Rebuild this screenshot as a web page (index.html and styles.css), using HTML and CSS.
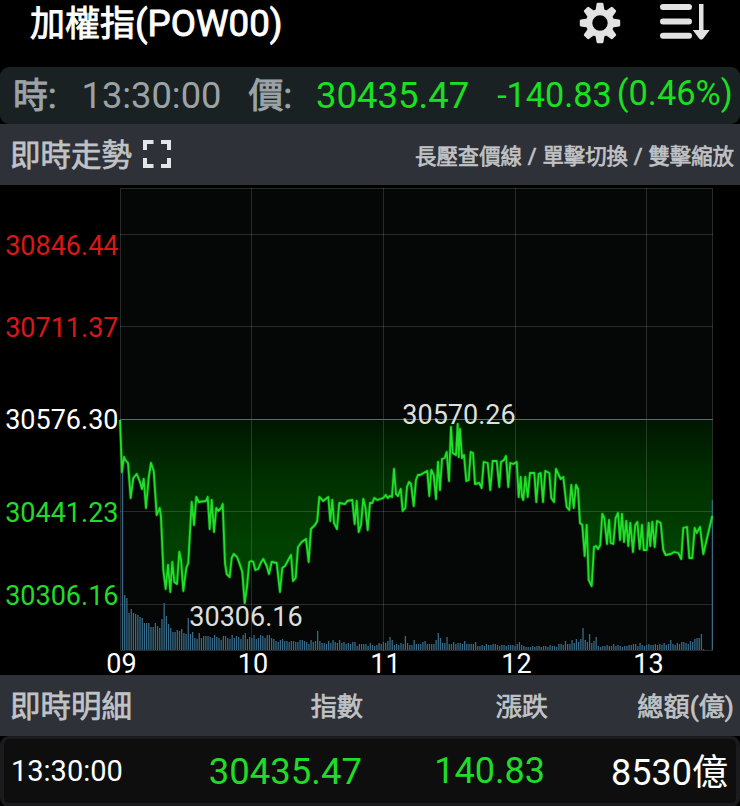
FILE: index.html
```html
<!DOCTYPE html>
<html lang="zh-Hant">
<head>
  <meta charset="UTF-8">
  <meta name="viewport" content="width=device-width, initial-scale=1.0">
  <title>加權指(POW00)</title>
  <link rel="stylesheet" href="styles.css">
</head>
<body>
  <div class="header">
    <h1>加權指<span class="symbol">(POW00)</span></h1>
    <div class="header-icons">
      <svg width="42" height="44" viewBox="-21 -23 42 44">
        <g fill="#e2e2e2">
          <path fill-rule="evenodd" d="M0-14a14 14 0 1 0 0 28a14 14 0 1 0 0-28zM0-7.700a7.700 7.700 0 1 1 0 15.400a7.700 7.700 0 1 1 0-15.400z"/>
          <path id="tooth" d="M-4.600-12L-3.400-19.200Q-3.200-20.200-2.200-20.200H2.200Q3.200-20.200 3.400-19.200L4.600-12z"/>
          <use href="#tooth" transform="rotate(45)"/>
          <use href="#tooth" transform="rotate(90)"/>
          <use href="#tooth" transform="rotate(135)"/>
          <use href="#tooth" transform="rotate(180)"/>
          <use href="#tooth" transform="rotate(225)"/>
          <use href="#tooth" transform="rotate(270)"/>
          <use href="#tooth" transform="rotate(315)"/>
        </g>
      </svg>
      <svg width="52" height="42" viewBox="0 -1.500 52 42">
        <path d="M4 5.500H30M4 20H30M4 34.300H30" stroke="#e2e2e2" stroke-width="6" stroke-linecap="round"/>
        <path d="M40 2.500h4.500v26h6.200l-6.400 8.600q-2.100 2.200-4.200 0L33.800 28.500h6.200z" fill="#e2e2e2"/>
      </svg>
    </div>
  </div>

  <div class="quote">
    <span class="quote-label">時:</span>
    <span class="quote-time">13:30:00</span>
    <span class="quote-label">價:</span>
    <span class="quote-price">30435.47</span>
    <span class="quote-change">-140.83</span>
    <span class="quote-percent">(0.46%)</span>
  </div>

  <div class="bar">
    <h2>即時走勢</h2>
    <svg class="expand" width="28" height="28" viewBox="0 0 28 28">
      <path d="M2 10V2H10.500M18 2H26V10M26 18V26H18M10.500 26H2V18" fill="none" stroke="#e4e5e7" stroke-width="4"/>
    </svg>
    <span class="hint">長壓查價線 / 單擊切換 / 雙擊縮放</span>
  </div>

  <svg class="chart" width="740" height="490" viewBox="0 185 740 490">
    <defs>
      <linearGradient id="fall" gradientUnits="userSpaceOnUse" x1="0" y1="419" x2="0" y2="540">
        <stop offset="0" stop-color="#001600"/>
        <stop offset="0.5" stop-color="#003000"/>
        <stop offset="1" stop-color="#004000"/>
      </linearGradient>
    </defs>
    <rect x="120" y="188" width="593" height="463" fill="#040706"/>
    <path id="area" fill="url(#fall)"/>
    <g class="grid">
      <path d="M120.500 188.500H712.500V650.500H120.500z"/>
      <path d="M120 234.500H713M120 326.500H713M120 511.500H713M120 604.500H713"/>
      <path d="M251.500 188V651M383.500 188V651M515.500 188V651M646.500 188V651"/>
    </g>
    <path class="base-line" d="M120 419.500H713"/>
    <path id="volume" class="volume"/>
    <polyline id="glow" class="glow"/>
    <polyline id="price" class="price"/>
    <g class="y-axis">
      <text class="up" x="118.500" y="254.500">30846.44</text>
      <text class="up" x="118.500" y="336.500">30711.37</text>
      <text x="118.500" y="429">30576.30</text>
      <text class="down" x="118.500" y="521.500">30441.23</text>
      <text class="down" x="118.500" y="604.500">30306.16</text>
    </g>
    <g class="x-axis">
      <text x="121.500" y="673">09</text>
      <text x="253" y="673">10</text>
      <text x="385.500" y="673">11</text>
      <text x="516.500" y="673">12</text>
      <text x="648.500" y="673">13</text>
    </g>
    <text class="mark" x="459" y="423.500">30570.26</text>
    <text class="mark" x="246" y="625.500">30306.16</text>
  </svg>

  <div class="bar detail-head">
    <h2>即時明細</h2>
    <span>指數</span>
    <span>漲跌</span>
    <span>總額(億)</span>
  </div>
  <div class="detail-row">
    <span class="detail-time">13:30:00</span>
    <span class="down">30435.47</span>
    <span class="down detail-change">140.83</span>
    <span class="detail-total">8530億</span>
  </div>

  <script>
    const points = "120,420 122,472 124,457 125.3,460 128,463 130.7,498 133.3,478 136.7,474 140,482 142,489 143.7,479 146,508 " +
      "148.7,478 151,463 153.7,471 156.7,515 159.7,508 161,517 163.3,570 165.7,589 168,565 170.3,592 172.3,562 174.3,582 " +
      "177,584 179.3,552 181,560 183.3,591 186.3,568 188.3,563 191.7,502 194,525 196.3,497 198.7,502 206,501 207.7,497 " +
      "209.7,529 211.7,500 214,532 216.3,508 218.3,511 221.3,508 222.7,504 225,563 226.7,574 229.7,577 231.7,558 233.7,554 " +
      "237,557 239.3,563 242.3,572 244.7,603 247,587 249.3,562 251.3,561 253.3,562 255.3,570 258.3,569 260.7,563 263.3,559 " +
      "266.7,566 269,574 271.7,562 276.7,563 280,592 282.3,568 285,566 291,555 293,581 295.7,578 298,547 301.7,542 306,539 " +
      "308.7,562 311,529 315,525 317.3,521 319.3,497 323.3,501 325.7,499 328.3,497 330.3,521 332.3,500 334,523 337,529 " +
      "339.3,503 345,504 347.3,501 352.3,500 354.7,524 356.7,501 358.7,532 361,525 363.3,499 365.3,507 367.7,530 370,503 " +
      "372.3,503 374.3,498 377.3,500 383.3,498 385.7,495 387.7,498 390,496 392,497 394,469 396,494 398,496 400.7,489 " +
      "402.7,511 405.3,508 407,487 409,482 411,484 413.7,506 416,480 418,475 420,475 427.3,471 429.3,496 431.3,470 433.7,475 " +
      "436,499 438,462 440,490 442,459 444.7,458 446.7,452 449,481 451,427 452.7,453 456,455 457.7,424 458.7,457 460,429 " +
      "462,458 464,455 466.3,481 468.7,480 470.7,452 473,453 475,484 479.3,483 481.7,488 483.7,462 487.7,463 490.3,490 " +
      "492.7,461 496.7,461 499.3,487 501,462 504,460 506,456 508.3,487 510.3,463 513.3,464 516.7,462 518.7,497 520.7,477 " +
      "522,497 523.3,500 525.3,477 527.7,497 530,473 534.3,473 536.3,502 538.7,474 540.7,473 543,502 545.3,471 549.3,473 " +
      "551.3,498 554,502 556,469 558.3,474 560.7,479 563.3,477 566.7,507 569.3,510 571.3,485 573.7,508 576,485 578,489 " +
      "580,523 582.3,525 584.7,556 586.7,525 588.7,580 591.7,586 594,547 596,546 598,549 600.3,545 602.3,514 604.3,518 " +
      "607,544 609,520 610.7,543 613.3,544 615.7,518 618,513 620,540 622,514 624,542 626.3,521 628.3,546 630.3,523 633,552 " +
      "635.3,525 637.3,522 639.7,549 642,525 643.7,550 646.7,550 648.7,523 650.3,546 652.3,522 654.7,547 657,521 660.7,523 " +
      "663.3,550 665.7,555 670.7,554 674.3,552 678.3,553 681.3,559 683.3,528 687,527 689.3,558 692.3,558 694.7,528 " +
      "696.7,533 700,527 703.3,554 712.3,516";

    // one bar per minute, 09:00 - 13:30
    const volumes = [
      0, 178, 55, 52, 37, 41, 37, 36, 35, 33, 32, 27, 27, 27, 23, 23, 27, 24, 22, 31,
      47, 34, 26, 22, 18, 18, 20, 19, 21, 17, 16, 32, 16, 18, 12, 11, 17, 12, 14, 14,
      14, 13, 12, 15, 13, 12, 10, 14, 14, 12, 11, 15, 12, 14, 13, 11, 15, 17, 11, 13,
      12, 15, 11, 12, 15, 14, 12, 15, 15, 12, 11, 9, 8, 10, 11, 9, 9, 8, 9, 9,
      8, 8, 10, 10, 9, 8, 6, 10, 8, 9, 19, 9, 7, 7, 6, 9, 7, 10, 8, 7,
      10, 7, 8, 6, 7, 6, 8, 8, 4, 6, 6, 6, 6, 4, 7, 5, 4, 5, 7, 6,
      8, 7, 9, 13, 10, 5, 6, 5, 7, 6, 14, 7, 5, 5, 10, 6, 6, 6, 8, 9,
      6, 6, 6, 6, 10, 17, 12, 7, 7, 13, 6, 6, 8, 6, 7, 7, 6, 9, 6, 6,
      6, 6, 8, 4, 4, 5, 4, 6, 5, 5, 6, 6, 5, 4, 5, 5, 4, 5, 5, 5,
      4, 6, 8, 5, 4, 3, 3, 3, 4, 3, 4, 4, 3, 4, 4, 3, 5, 4, 4, 3,
      6, 6, 5, 9, 6, 6, 10, 7, 11, 8, 11, 22, 10, 8, 16, 7, 9, 13, 4, 3,
      4, 4, 5, 4, 4, 6, 4, 5, 4, 3, 4, 4, 5, 5, 6, 6, 4, 7, 5, 4,
      5, 6, 5, 5, 6, 5, 6, 5, 7, 5, 6, 10, 6, 5, 7, 6, 8, 8, 7, 6,
      9, 8, 11, 12, 12, 16, 1, 0, 0, 0, 150
    ];

    let bars = "";
    volumes.forEach((v, i) => {
      const x = (120.3 + i * 2.193).toFixed(2);
      if (v > 0) bars += "M" + x + " 650V" + (650 - v);
    });

    document.getElementById("price").setAttribute("points", points);
    document.getElementById("glow").setAttribute("points", points);
    document.getElementById("area").setAttribute("d", "M120 419L" + points.split(" ").join("L") + "V419z");
    document.getElementById("volume").setAttribute("d", bars);
  </script>
</body>
</html>
```
FILE: styles.css
```css
body {
  margin: 0;
  background: #000;
  color: #fff;
  font-family: Roboto, "Noto Sans CJK TC", sans-serif;
  width: 740px;
  height: 806px;
  overflow: hidden;
}
h1, h2 {
  margin: 0;
}
.header {
  display: flex;
  justify-content: space-between;
  box-sizing: border-box;
  height: 67px;
  padding: 0 29px 0 30px;
}
h1 {
  padding-top: 2px;
  font-size: 35px;
  font-weight: 400;
  line-height: 44px;
  -webkit-text-stroke: 0.9px #fff;
}
.symbol {
  font-size: 36.7px;
}
.header-icons {
  display: flex;
  gap: 38px;
}
.quote {
  display: flex;
  align-items: center;
  height: 57px;
  padding-left: 13px;
  border-radius: 9px;
  background: #1a2122;
  color: #19e020;
  line-height: 57px;
  white-space: nowrap;
}
.quote-label {
  padding-top: 2px;
  color: #9ca3a7;
  font-size: 35px;
  -webkit-text-stroke: 0.9px #9ca3a7;
}
.quote-time {
  margin: 0 27px 0 25px;
  color: #9ca3a7;
  font-size: 36.3px;
}
.quote-price {
  margin-left: 24px;
  font-size: 36.5px;
}
.quote-change {
  margin-left: 28px;
  font-size: 34.2px;
}
.quote-percent {
  margin-left: 5px;
  font-size: 34.4px;
  position: relative;
  top: -2px;
}
.bar {
  display: flex;
  align-items: center;
  box-sizing: border-box;
  height: 61px;
  padding: 0 6px 1px 10px;
  background: #2e3138;
  color: #c0c3c6;
  -webkit-text-stroke: 0.7px #c0c3c6;
}
h2 {
  padding-bottom: 2px;
  font-size: 30.5px;
  font-weight: 400;
}
.expand {
  margin-left: 11px;
}
.hint {
  margin-left: auto;
  font-size: 21.4px;
  word-spacing: 0.5px;
}
.chart {
  display: block;
  position: relative;
  overflow: visible;
}
.grid path {
  fill: none;
  stroke: #fff;
  stroke-opacity: 0.14;
}
.base-line {
  stroke: #546c72;
}
.volume {
  stroke: #376a88;
  stroke-width: 1.3;
}
.price {
  fill: none;
  stroke: #22e02a;
  stroke-width: 1.8;
  stroke-linejoin: round;
}
.glow {
  fill: none;
  stroke: #10b018;
  stroke-width: 3.4;
  stroke-opacity: 0.4;
  stroke-linejoin: round;
}
.chart text {
  fill: #fff;
  font-size: 27px;
}
.y-axis text {
  text-anchor: end;
}
.x-axis text, .chart .mark {
  text-anchor: middle;
}
.chart .mark {
  fill: #dcdfdc;
}
.chart .up {
  fill: #d81818;
}
.chart .down {
  fill: #20dc28;
}
.detail-head, .detail-row {
  display: grid;
  grid-template-columns: 134px 219px 185px 1fr;
  align-items: center;
}
.detail-head span, .detail-row span {
  text-align: right;
}
.detail-head span {
  font-size: 26.2px;
}
.detail-row {
  box-sizing: border-box;
  height: 71px;
  padding: 0 8px 0 7px;
  border: 4px solid #1b1b1d;
  border-top-width: 3px;
  border-radius: 9px;
  background: #0e0e0e;
  font-size: 36.5px;
  grid-template-columns: 132px 219px 183px 1fr;
}
.detail-row .detail-time {
  font-size: 29px;
  text-align: left;
}
.detail-row .detail-change {
  font-size: 36px;
}
.detail-row .detail-total {
  padding-bottom: 4px;
  font-size: 36px;
}
.detail-row .down {
  color: #20dc28;
}
```
